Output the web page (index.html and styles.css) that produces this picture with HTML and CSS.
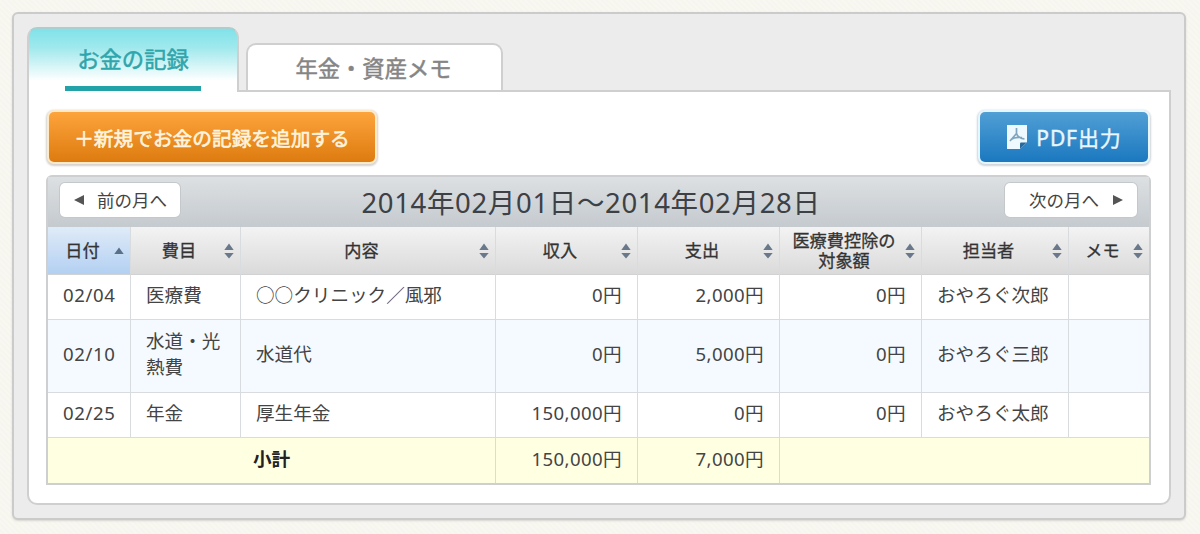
FILE: index.html
```html
<!DOCTYPE html>
<html lang="ja">
<head>
<meta charset="utf-8">
<title>お金の記録</title>
<link rel="stylesheet" href="styles.css">
</head>
<body>
<svg width="0" height="0" class="defs">
  <symbol id="sort" viewBox="0 0 12 16"><path d="M6 0.5 10.7 7H1.3zM6 15.5 1.3 10h9.4z" fill="#69788a"/></symbol>
</svg>
<main class="frame">
  <nav class="tabs">
    <a class="tab tab-active"><span>お金の記録</span></a>
    <a class="tab tab-idle"><span>年金・資産メモ</span></a>
  </nav>
  <section class="panel">
    <div class="actions">
      <a class="btn btn-add"><span>＋新規でお金の記録を追加する</span></a>
      <a class="btn btn-pdf">
        <svg class="pdf-icon" width="22" height="26" viewBox="0 0 22 26"><path d="M1 1h20v17l-7 7H1z" fill="#eef8ff"/><path d="M20.500 18.500 14 25v-5.500q0-1 1-1z" fill="#26699f"/><path d="M10.500 4v5.500L4 17M10.500 9.500c1 3 3.500 5 8 5.500M5 15.500c3-2 7-2.500 11-2" fill="none" stroke="#7fa4bd" stroke-width="1.700"/></svg>
        <span>PDF出力</span>
      </a>
    </div>
    <div class="ledger">
      <div class="month-bar">
        <a class="month-btn prev"><svg width="10" height="10" viewBox="0 0 10 10"><path d="M0 5 10 0v10z" fill="#555"/></svg><span>前の月へ</span></a>
        <h1>2014年02月01日～2014年02月28日</h1>
        <a class="month-btn next"><span>次の月へ</span><svg width="10" height="10" viewBox="0 0 10 10"><path d="M10 5 0 0v10z" fill="#555"/></svg></a>
      </div>
      <table>
        <colgroup><col class="c-date"><col class="c-item"><col class="c-desc"><col class="c-in"><col class="c-out"><col class="c-med"><col class="c-who"><col class="c-memo"></colgroup>
        <thead>
          <tr>
            <th class="sorted"><div><span>日付</span><svg width="12" height="16" viewBox="0 0 12 16"><path d="M6 4.500 10.700 11H1.300z" fill="#5c6f88"/></svg></div></th>
            <th><div><span>費目</span><svg width="12" height="16"><use href="#sort"/></svg></div></th>
            <th><div><span>内容</span><svg width="12" height="16"><use href="#sort"/></svg></div></th>
            <th><div><span>収入</span><svg width="12" height="16"><use href="#sort"/></svg></div></th>
            <th><div><span>支出</span><svg width="12" height="16"><use href="#sort"/></svg></div></th>
            <th><div><span>医療費控除の<br>対象額</span><svg width="12" height="16"><use href="#sort"/></svg></div></th>
            <th><div><span>担当者</span><svg width="12" height="16"><use href="#sort"/></svg></div></th>
            <th><div><span>メモ</span><svg width="12" height="16"><use href="#sort"/></svg></div></th>
          </tr>
        </thead>
        <tbody>
          <tr class="short"><td class="date">02/04</td><td>医療費</td><td>○○クリニック／風邪</td><td class="num">0円</td><td class="num">2,000円</td><td class="num">0円</td><td>おやろぐ次郎</td><td></td></tr>
          <tr class="tall"><td class="date">02/10</td><td>水道・光<br>熱費</td><td>水道代</td><td class="num">0円</td><td class="num">5,000円</td><td class="num">0円</td><td>おやろぐ三郎</td><td></td></tr>
          <tr class="short"><td class="date">02/25</td><td>年金</td><td>厚生年金</td><td class="num">150,000円</td><td class="num">0円</td><td class="num">0円</td><td>おやろぐ太郎</td><td></td></tr>
        </tbody>
        <tfoot>
          <tr class="total"><td colspan="3" class="total-label">小計</td><td class="num">150,000円</td><td class="num">7,000円</td><td colspan="3"></td></tr>
        </tfoot>
      </table>
    </div>
  </section>
</main>
</body>
</html>
```
FILE: styles.css
```css
* { box-sizing: border-box; }
body {
  margin: 0;
  padding: 12px 14px 13px 12px;
  height: 534px;
  overflow: hidden;
  background: repeating-linear-gradient(45deg, #f8f7f1 0 2px, #f6f5ee 2px 4px);
  font-family: "Noto Sans", "Noto Sans CJK JP", sans-serif;
  color: #444;
}
.defs { display: block; height: 0; width: 0; }
.frame {
  height: 508px;
  padding: 13px 13px 0;
  border: 2px solid #cbcbcb;
  border-radius: 6px;
  background: #ececec;
  box-shadow: 0 1px 2px #d8d6d0;
}
.tabs { display: flex; align-items: flex-end; gap: 7px; height: 63px; }
.tab {
  border: 2px solid #cfcfcf;
  border-bottom: 0;
  border-radius: 10px 10px 0 0;
  text-align: center;
  white-space: nowrap;
}
.tab-active {
  position: relative;
  z-index: 1;
  width: 212px;
  height: 65px;
  margin-bottom: -2px;
  padding: 0 36px;
  border-top-color: #a9cfd1;
  background: linear-gradient(#80e2e9, #a0e9ed 30%, #fff 82%);
  color: #2fa5ac;
  font-size: 22.300px;
  line-height: 61px;
  -webkit-text-stroke: .5px #2fa5ac;
}
.tab-active span {
  display: block;
  height: 62px;
  border-bottom: 5px solid #23a2a8;
}
.tab-idle {
  width: 257px;
  height: 47px;
  padding-right: 2px;
  background: #fff;
  color: #858585;
  font-size: 22.300px;
  line-height: 48px;
  -webkit-text-stroke: .5px #858585;
}
.panel {
  height: 415px;
  padding: 19px 18px 0 17px;
  border: 2px solid #cfcfcf;
  border-radius: 0 0 10px 10px;
  background: #fff;
}
.actions { display: flex; justify-content: space-between; height: 64px; }
.btn {
  display: flex;
  align-items: center;
  justify-content: center;
  height: 50px;
  margin-top: 1px;
  border-radius: 5px;
  font-size: 19.700px;
  white-space: nowrap;
}
.btn-add {
  width: 326px;
  margin-left: 3px;
  background: linear-gradient(#fda43c, #dd7b0f);
  box-shadow: 0 0 0 2px #fdeacb, 0 1px 2px 3px #d5d2cf;
  color: #fff4df;
  -webkit-text-stroke: .6px #fff4df;
}
.btn-pdf {
  gap: 8px;
  width: 168px;
  margin-right: 3px;
  background: linear-gradient(#509fd5, #1b78bf);
  box-shadow: 0 0 0 2px #e5f6ff, 0 1px 2px 3px #d0d6da;
  color: #eaf7ff;
  font-size: 21px;
  letter-spacing: .9px;
  -webkit-text-stroke: .4px #eaf7ff;
}
.ledger {
  width: 1105px;
  border: 2px solid #cdcfd1;
  border-radius: 6px 6px 0 0;
}
.month-bar {
  display: flex;
  justify-content: space-between;
  height: 50px;
  padding: 6px 12px 0;
  background: linear-gradient(#dce0e2, #c5cacf);
}
.month-btn {
  display: flex;
  align-items: center;
  height: 34px;
  padding-bottom: 1px;
  border-radius: 5px;
  background: #fff;
  box-shadow: 0 0 0 1px #c4c8cb;
  font-size: 17.500px;
  white-space: nowrap;
}
.prev { width: 120px; padding-left: 14px; gap: 13px; }
.next { width: 132px; padding-left: 24px; gap: 14px; }
h1 {
  margin: 0 3px 0 0;
  color: #3d4044;
  font-size: 27.500px;
  font-weight: 400;
  line-height: 40px;
  letter-spacing: .65px;
}
table { width: 1101px; table-layout: fixed; border-collapse: separate; border-spacing: 0; }
.c-date { width: 83px; }
.c-item { width: 110px; }
.c-desc { width: 255px; }
.c-in, .c-out, .c-med { width: 142px; }
.c-who { width: 147px; }
.c-memo { width: 80px; }
th, td { border-right: 1px solid #d9dcdf; }
th:last-child, td:last-child { border-right: 0; }
th {
  height: 48px;
  padding: 0 5px 0 4px;
  background: linear-gradient(#f3f3f3, #dadada);
  border-bottom: 1px solid #d0d2d4;
  color: #333;
  font-size: 17.200px;
  font-weight: 400;
  line-height: 20px;
  -webkit-text-stroke: .3px #333;
}
th div { display: flex; align-items: center; }
th span { flex: 1; white-space: nowrap; }
th svg { flex: none; -webkit-text-stroke: 0; }
.sorted { background: linear-gradient(#dfebf8, #b3d0f2); }
td {
  padding: 0 15px;
  border-bottom: 1px solid #d9dcdf;
  font-size: 18.600px;
  line-height: 26px;
  white-space: nowrap;
}
.date { letter-spacing: .6px; }
.num { text-align: right; letter-spacing: .4px; }
.short td { height: 45px; padding-bottom: 4px; }
.tall td { height: 73px; padding-bottom: 4px; background: #f4faff; }
.total td { height: 45px; padding-bottom: 3px; border-bottom: 0; background: #ffffe2; }
.total .total-label { text-align: center; color: #222; font-weight: 700; }
```
